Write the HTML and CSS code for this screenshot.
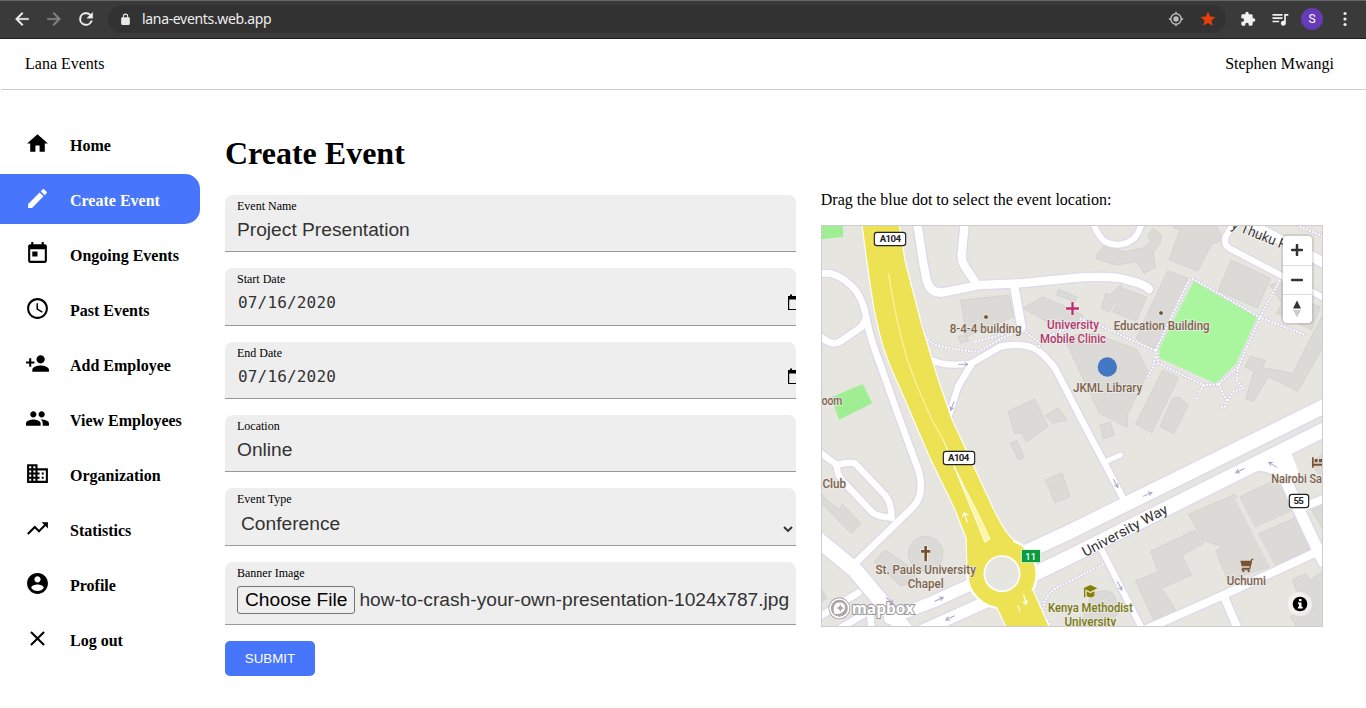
FILE: index.html
```html
<!DOCTYPE html>
<html lang="en">
<head>
<meta charset="utf-8">
<title>Lana Events</title>
<link rel="stylesheet" href="styles.css">
</head>
<body>
<div class="toolbar">
  <svg class="tb-icon" viewBox="0 0 24 24"><path d="M20 11H7.83l5.59-5.59L12 4l-8 8 8 8 1.41-1.41L7.83 13H20v-2z"/></svg>
  <svg class="tb-icon dim" viewBox="0 0 24 24"><path d="M12 4l-1.41 1.41L16.17 11H4v2h12.17l-5.58 5.59L12 20l8-8z"/></svg>
  <svg class="tb-icon" viewBox="0 0 24 24"><path d="M17.65 6.35A7.96 7.96 0 0 0 12 4a8 8 0 1 0 7.73 10h-2.08A6 6 0 1 1 12 6c1.66 0 3.14.69 4.22 1.78L13 11h7V4l-2.350 2.350z"/></svg>
  <div class="address">
    <svg class="lock" viewBox="0 0 24 24"><path d="M18 8h-1V6A5 5 0 0 0 7 6v2H6a2 2 0 0 0-2 2v10c0 1.100.9 2 2 2h12a2 2 0 0 0 2-2V10a2 2 0 0 0-2-2zM9 8V6a3 3 0 0 1 6 0v2z"/></svg>
    <span class="url">lana-events.web.app</span>
    <svg class="locate" viewBox="0 0 16 16"><circle cx="8" cy="8" r="5.200" fill="none" stroke="#bdbdbd" stroke-width="1.400"/><circle cx="8" cy="8" r="2.700" fill="#bdbdbd"/><path d="M8 .8V3M8 13v2.200M.8 8H3M13 8h2.200" stroke="#bdbdbd" stroke-width="1.400"/></svg>
    <svg class="star" viewBox="0 0 24 24"><path d="M12 17.270L18.180 21l-1.640-7.030L22 9.240l-7.190-.61L12 2 9.190 8.630 2 9.240l5.460 4.730L5.820 21z"/></svg>
  </div>
  <svg class="tb-ext" viewBox="0 0 24 24"><path d="M20.500 11H19V7a2 2 0 0 0-2-2h-4V3.500a2.500 2.500 0 0 0-5 0V5H4a2 2 0 0 0-2 2v3.800h1.500a2.700 2.700 0 0 1 0 5.400H2V20c0 1.100.9 2 2 2h3.800v-1.500a2.700 2.700 0 0 1 5.400 0V22H17a2 2 0 0 0 2-2v-4h1.500a2.500 2.500 0 0 0 0-5z"/></svg>
  <svg class="tb-music" viewBox="0 0 24 24"><path d="M15 6H3v2h12V6zm0 4H3v2h12v-2zM3 16h8v-2H3v2zM17 6v8.180c-.31-.11-.65-.18-1-.18-1.660 0-3 1.340-3 3s1.340 3 3 3 3-1.340 3-3V8h3V6h-5z"/></svg>
  <span class="avatar">S</span>
  <svg class="tb-dots" viewBox="0 0 4 16"><circle cx="2" cy="2.500" r="1.600"/><circle cx="2" cy="8" r="1.600"/><circle cx="2" cy="13.500" r="1.600"/></svg>
</div>

<header class="site-header"><span>Lana Events</span><span>Stephen Mwangi</span></header>

<div class="layout">
  <nav class="sidebar">
    <a class="item"><svg viewBox="0 0 24 24"><path d="M10 20v-6h4v6h5v-8h3L12 3 2 12h3v8z"/></svg><span>Home</span></a>
    <a class="item active"><svg viewBox="0 0 24 24"><path d="M3 17.250V21h3.750L17.810 9.940l-3.750-3.750L3 17.250zM20.710 7.040c.39-.39.39-1.020 0-1.410l-2.340-2.340c-.39-.39-1.020-.39-1.410 0l-1.830 1.830 3.750 3.750 1.830-1.830z"/></svg><span>Create Event</span></a>
    <a class="item"><svg viewBox="0 0 24 24"><path d="M19 3h-1V1h-2v2H8V1H6v2H5c-1.110 0-1.990.9-1.990 2L3 19c0 1.100.89 2 2 2h14c1.100 0 2-.9 2-2V5c0-1.100-.9-2-2-2zm0 16H5V8h14v11zM7 10h5v5H7z"/></svg><span>Ongoing Events</span></a>
    <a class="item"><svg viewBox="0 0 24 24"><path d="M11.990 2C6.470 2 2 6.480 2 12s4.470 10 9.990 10C17.520 22 22 17.520 22 12S17.520 2 11.990 2zM12 20c-4.420 0-8-3.580-8-8s3.580-8 8-8 8 3.580 8 8-3.580 8-8 8zm.5-13H11v6l5.250 3.150.75-1.230-4.500-2.670z"/></svg><span>Past Events</span></a>
    <a class="item"><svg viewBox="0 0 24 24"><path d="M15 12c2.210 0 4-1.790 4-4s-1.790-4-4-4-4 1.790-4 4 1.790 4 4 4zm-9-2V7H4v3H1v2h3v3h2v-3h3v-2H6zm9 4c-2.670 0-8 1.340-8 4v2h16v-2c0-2.660-5.330-4-8-4z"/></svg><span>Add Employee</span></a>
    <a class="item"><svg viewBox="0 0 24 24"><path d="M16 11c1.660 0 2.990-1.340 2.990-3S17.660 5 16 5c-1.660 0-3 1.340-3 3s1.340 3 3 3zm-8 0c1.660 0 2.990-1.340 2.990-3S9.660 5 8 5C6.340 5 5 6.340 5 8s1.340 3 3 3zm0 2c-2.330 0-7 1.170-7 3.500V19h14v-2.500c0-2.330-4.670-3.500-7-3.500zm8 0c-.29 0-.62.02-.97.05 1.160.84 1.970 1.970 1.970 3.450V19h6v-2.500c0-2.330-4.670-3.500-7-3.500z"/></svg><span>View Employees</span></a>
    <a class="item"><svg viewBox="0 0 24 24"><path d="M12 7V3H2v18h20V7H12zM6 19H4v-2h2v2zm0-4H4v-2h2v2zm0-4H4V9h2v2zm0-4H4V5h2v2zm4 12H8v-2h2v2zm0-4H8v-2h2v2zm0-4H8V9h2v2zm0-4H8V5h2v2zm10 12h-8v-2h2v-2h-2v-2h2v-2h-2V9h8v10zm-2-8h-2v2h2v-2zm0 4h-2v2h2v-2z"/></svg><span>Organization</span></a>
    <a class="item"><svg viewBox="0 0 24 24"><path d="M16 6l2.290 2.290-4.880 4.880-4-4L2 16.590 3.410 18l6-6 4 4 6.300-6.290L22 12V6z"/></svg><span>Statistics</span></a>
    <a class="item"><svg viewBox="0 0 24 24"><path d="M12 2C6.480 2 2 6.480 2 12s4.480 10 10 10 10-4.480 10-10S17.520 2 12 2zm0 3c1.660 0 3 1.340 3 3s-1.340 3-3 3-3-1.340-3-3 1.340-3 3-3zm0 14.200c-2.500 0-4.710-1.280-6-3.220.03-1.990 4-3.080 6-3.080 1.990 0 5.970 1.090 6 3.080-1.290 1.940-3.500 3.220-6 3.220z"/></svg><span>Profile</span></a>
    <a class="item"><svg viewBox="0 0 24 24"><path d="M19 6.410L17.590 5 12 10.590 6.410 5 5 6.410 10.590 12 5 17.590 6.410 19 12 13.410 17.590 19 19 17.590 13.410 12z"/></svg><span>Log out</span></a>
  </nav>

  <main class="content">
    <h1>Create Event</h1>
    <div class="columns">
      <form class="form">
        <div class="field"><label>Event Name</label><div class="value">Project Presentation</div></div>
        <div class="field"><label>Start Date</label><div class="value date"><span>07/16/2020</span><svg viewBox="0 0 18 18"><path d="M1 3h16v14H1zM2.200 6.500v9.400h14V6.500z" fill-rule="evenodd"/><path d="M3 1.500h2v2H3z"/></svg></div></div>
        <div class="field"><label>End Date</label><div class="value date"><span>07/16/2020</span><svg viewBox="0 0 18 18"><path d="M1 3h16v14H1zM2.200 6.500v9.400h14V6.500z" fill-rule="evenodd"/><path d="M3 1.500h2v2H3z"/></svg></div></div>
        <div class="field"><label>Location</label><div class="value">Online</div></div>
        <div class="field"><label>Event Type</label><div class="value select"><span>Conference</span><svg viewBox="0 0 10 8"><path d="M1 2l4 4 4-4" fill="none" stroke="#333" stroke-width="1.900"/></svg></div></div>
        <div class="field tall"><label>Banner Image</label><div class="file"><span class="choose">Choose File</span><span class="filename">how-to-crash-your-own-presentation-1024x787.jpg</span></div></div>
        <button class="submit" type="button">SUBMIT</button>
      </form>

      <section class="location">
        <p>Drag the blue dot to select the event location:</p>
        <div class="map">
          <svg class="map-canvas" viewBox="6 18 1500 1200">
            <defs>
              <g id="arrow"><path d="M-15 0H13M3-6L14 0 3 6" fill="none" stroke="#aaa5ca" stroke-width="3"/></g>
              <g id="roads">
                <path stroke-width="20" d="M0 160H30Q75 172 110 215Q132 250 138 290Q150 350 165 390L240 600L297 755Q314 825 280 860L100 1035M0 348Q35 380 60 365L125 320L140 292"/>
                <path stroke-width="25" d="M292 10L310 130L320 180Q330 222 370 217L480 195L600 190L750 175Q880 164 920 180Q970 190 987 207"/>
                <path stroke-width="25" d="M434 10L425 105Q425 130 440 148L470 192M583 200L605 325"/>
                <path stroke-width="19" d="M325 415Q370 443 455 430L540 380Q610 365 655 392Q685 415 708 450L785 600L912 840M455 432L415 498L385 592"/>
                <path stroke-width="18" d="M820 10Q835 50 855 65Q900 86 938 58Q955 45 965 10"/>
                <path stroke-width="18" d="M1240 10L1217 50Q1210 75 1230 86L1390 170L1515 235"/>
                <path stroke-width="30" d="M1275 5L1515 130"/>
                <path stroke-width="43" d="M610 1000L750 935L1520 555M635 1066L750 1010L1520 625"/>
                <path stroke-width="19" d="M0 697L50 735Q85 725 105 730L195 825Q215 850 215 895M50 735Q50 758 65 780L155 875Q170 890 215 893"/>
                <path stroke-width="46" d="M-10 955L105 1050L260 1235"/>
                <path stroke-width="35" d="M460 1090L340 1145L210 1195M500 1145L300 1235"/>
                <path stroke-width="20" d="M-10 1195L115 1118M60 1225L150 1172L155 1230"/>
                <path stroke-width="14" d="M850 728L902 705"/>
                <path stroke-width="18" d="M845 990L968 1230"/>
                <path stroke-width="24" d="M980 1227L1200 1130L1520 982M1210 1125L1255 1230"/>
                <path stroke-width="34" d="M1310 735Q1375 738 1395 775L1430 855L1510 1025"/>
                <path stroke-width="24" d="M1450 860L1515 835"/>
              </g>
              <g id="footpaths">
                <path d="M300 300Q315 370 350 375Q420 393 475 395L555 350 600 335M465 365L550 343M610 330L660 370 655 385M680 350L760 320M780 295L840 317 1008 393M1008 390L1045 310 1105 185Q1115 172 1130 183L1320 292 1455 345M1380 180L1320 292 1255 440 1195 493 1150 495 1015 430 1008 390M1005 410L1000 440 980 475M1150 495L1130 535M1195 493L1220 540 1215 560 1200 563M1255 440L1250 480 1270 505 1240 515 1222 543M1430 15L1510 50"/>
                <path d="M850 1033L710 1103Q668 1130 670 1180L690 1215"/>
              </g>
            </defs>
            <rect x="0" y="0" width="1520" height="1230" fill="#e6e5e0"/>
            <path d="M0 10H68L70 50 6 58zM34 532L128 492 157 550 57 599z" fill="#a0ee93"/>
            <g class="buildings">
              <path d="M422 241L566 225 582 290 440 350zM414 350L440 343 446 362 421 370zM608 265L668 230 790 285 765 330 710 320zM716 208L772 232 765 245 709 225zM564 574L645 537 684 620 620 666 604 638 584 640zM676 587L714 564 742 600 698 610zM570 670L590 661 613 712 596 720zM676 780L726 759 750 830 705 848z"/>
              <path d="M827 105L853 78 915 95 970 84 990 65 985 45 1000 24 1025 45 1020 70 1000 98 1006 142 972 160 950 125 890 135 830 117zM1085 10L1060 22 1080 30 1047 118 1133 154 1175 72 1210 60 1185 10zM1043 152L1104 175 1010 390 948 355zM908 205L980 232 948 304 878 275zM902 195L870 225 858 220 843 265 868 276 905 205zM1233 120L1352 175 1312 264 1195 212zM740 370L765 345 820 340 950 388 985 455 922 585 922 622 838 580zM1028 450L1076 473 995 638 947 612zM1058 535L1080 532 1105 555 1062 641 1020 620 1042 570zM1275 440L1292 408 1336 422 1327 443 1418 460 1510 280V380L1433 514 1345 470 1300 545 1277 537 1302 454zM1385 250L1350 195 1380 185 1440 240 1500 260 1475 330 1370 280zM840 615L870 605 883 645 850 657z"/>
              <path d="M0 815L20 840 60 870 67 852 122 910 95 942 0 845zM162 1025L195 990 270 1040 297 1080 242 1098z"/>
              <path d="M1105 883L1245 823 1352 1040 1223 1080 1187 993 1206 980 1150 960zM1260 830L1365 780 1430 870 1305 925zM1315 942L1432 890 1483 980 1360 1040zM992 994L1125 930 1152 970 1085 1005 1115 1065 1025 1105 1073 1178 1005 1207 946 1082 1015 1055zM815 1120Q875 1100 885 1130L895 1180 850 1225 780 1220zM1417 1080L1457 1060 1470 1080 1510 1055V1220H1430L1410 1190 1480 1165 1450 1120 1430 1115zM1475 870L1510 855V930zM1475 730L1510 695V760H1495zM6 1110L20 1135 6 1145z"/>
              <circle cx="317" cy="1001" r="52"/>
            </g>
            <path d="M1122 182L1311 291 1248 432 1187 490 1019 415 1018 385z" fill="#aaf69e"/>
            <path d="M1252 835L1360 1045M1302 932L1430 875" stroke="#e6e5e0" stroke-width="14"/>
            <use href="#roads" class="casing"/>
            <use href="#roads" class="road"/>
            <path fill="#fff" d="M1290 740L1340 700 1414 665 1414 700 1445 780 1390 790Q1370 745 1320 742z"/>
            <use href="#footpaths" class="path-base"/>
            <use href="#footpaths" class="path-dash"/>
            <path class="hw-edge" d="M127 10L150 180Q160 260 180 340Q200 420 240 500L330 710 405 865 440 955 443 1061H560L580 960Q560 950 520 870L395 600 350 470 305 320 255 130 235 10z"/>
            <path class="hw-edge" d="M530 1160L565 1230H690L637 1110z"/>
            <circle class="hw-edge" cx="546" cy="1061" r="104"/>
            <path class="hw" d="M127 10L150 180Q160 260 180 340Q200 420 240 500L330 710 405 865 440 955 443 1061H560L580 960Q560 950 520 870L395 600 350 470 305 320 255 130 235 10z"/>
            <path class="hw" d="M525 1150L565 1230H690L637 1110z"/>
            <circle cx="546" cy="1061" r="53" fill="#e6e5e0" stroke="#fff" stroke-width="5"/>
            <path d="M206 160Q220 270 262 420Q292 505 336 600L370 660" fill="none" stroke="#fffbd0" stroke-width="2.500"/>
            <path d="M370 660L400 734 495 967 510 957Q475 880 445 825L400 734" fill="#fff4a0" stroke="#fff" stroke-width="3"/>
            <path d="M442 907L433 880M427 891L433 879 446 886M611 1123L618 1152M608 1145L618 1153 622 1139M600 1175L594 1157" fill="none" stroke="#fff" stroke-width="3.500"/>
            <use href="#arrow" transform="translate(430 433)"/>
            <use href="#arrow" transform="translate(397 558) rotate(112)"/>
            <use href="#arrow" transform="translate(983 823) rotate(-24)"/>
            <use href="#arrow" transform="translate(1260 752) rotate(154)"/>
            <use href="#arrow" transform="translate(1358 734) rotate(212)"/>
            <use href="#arrow" transform="translate(887 790) rotate(62)"/>
            <use href="#arrow" transform="translate(899 1098) rotate(62)"/>
            <use href="#arrow" transform="translate(357 1138) rotate(-25)"/>
            <use href="#arrow" transform="translate(390 1194) rotate(154)"/>
            <use href="#arrow" transform="translate(209 1142) rotate(42)"/>

            <g class="shield">
              <rect x="163" y="37" width="94" height="40" rx="8"/><text x="211" y="67" textLength="64">A104</text>
              <rect x="370" y="694" width="94" height="40" rx="8"/><text x="416" y="724" textLength="64">A104</text>
              <rect x="1408" y="823" width="58" height="40" rx="8"/><text x="1436" y="853" textLength="31">55</text>
            </g>
            <rect x="604" y="989" width="57" height="39" fill="#0a9c3f" stroke="#fff" stroke-width="2"/>
            <text class="green-no" x="632" y="1019">11</text>

            <g class="label">
              <text x="497" y="340" textLength="216" lengthAdjust="spacingAndGlyphs">8-4-4 building</text>
              <text x="1025" y="329" textLength="288" lengthAdjust="spacingAndGlyphs">Education Building</text>
              <text x="863" y="516" textLength="208" lengthAdjust="spacingAndGlyphs">JKML Library</text>
              <text x="36" y="555" textLength="62" lengthAdjust="spacingAndGlyphs">oom</text>
              <text x="43" y="804" textLength="71" lengthAdjust="spacingAndGlyphs">Club</text>
              <text x="317" y="1062" textLength="301" lengthAdjust="spacingAndGlyphs">St. Pauls University</text>
              <text x="317" y="1105" textLength="108" lengthAdjust="spacingAndGlyphs">Chapel</text>
              <text x="1279" y="1094" textLength="118" lengthAdjust="spacingAndGlyphs">Uchumi</text>
              <text x="1354" y="790" class="from-left" textLength="152" lengthAdjust="spacingAndGlyphs">Nairobi Sa</text>
            </g>
            <g class="label pink"><text x="759" y="327" textLength="156" lengthAdjust="spacingAndGlyphs">University</text><text x="759" y="369" textLength="198" lengthAdjust="spacingAndGlyphs">Mobile Clinic</text></g>
            <g class="label olive"><text x="811" y="1175" textLength="254" lengthAdjust="spacingAndGlyphs">Kenya Methodist</text><text x="811" y="1217" textLength="155" lengthAdjust="spacingAndGlyphs">University</text></g>
            <g class="street"><text transform="translate(921 944) rotate(-28)" textLength="284" lengthAdjust="spacingAndGlyphs">University Way</text><text transform="translate(1313 57) rotate(22)" textLength="174" lengthAdjust="spacingAndGlyphs">y Thuku R</text></g>
            <g stroke="#fff" stroke-width="2" fill="#6f4f31"><circle cx="498" cy="291" r="7"/><circle cx="1023" cy="279" r="7"/></g>
            <path d="M754 246h7v16h16v7h-16v16h-7v-16h-16v-7h16z" fill="#bd2d6c" stroke="#fff" stroke-width="3" paint-order="stroke"/>
            <path d="M313 978h8v12h10v8h-10v26h-8v-26h-10v-8h10z" fill="#7a5230" stroke="#fff" stroke-width="3" paint-order="stroke"/>
            <path d="M1261 1022h31l3-6h5v4h-3l-6 27h-25l-1-4h23l1-4h-24zM1264 1048h25v3h-25z" fill="#7a5230"/><circle cx="1270" cy="1053" r="3.500" fill="#7a5230"/><circle cx="1286" cy="1053" r="3.500" fill="#7a5230"/>
            <path d="M1476 712h5v19h40v12h-4v-6h-36v6h-5zM1484 717h9v10h-9zM1497 717h20v10h-20z" fill="#7a5230"/>
            <path d="M790 1105L811 1095 832 1105 811 1115zM800 1114v14q11 8 23 0v-14l-12 6zM792 1107h4v25h-4z" fill="#858000"/>
            <circle cx="862" cy="441" r="29" fill="#4377c4"/>
            <g class="logo"><circle cx="58" cy="1165" r="28" fill="none" stroke="#999" stroke-width="9"/><circle cx="58" cy="1165" r="28" fill="#aaa8a5" stroke="#fff" stroke-width="5"/><path d="M43 1181Q37 1156 50 1149Q65 1144 73 1153Q80 1170 65 1178Q54 1184 43 1181z" fill="#fff"/><path d="M61 1153l4 8 8 3-8 4-4 8-4-8-8-4 8-3z" fill="#aaa8a5"/><text x="95" y="1181" textLength="188" lengthAdjust="spacingAndGlyphs">mapbox</text></g>
          </svg>
          <div class="zoom-controls">
            <span><svg viewBox="0 0 12 12"><path d="M6 1v10M1 6h10" stroke="#333" stroke-width="2.500" stroke-linecap="round"/></svg></span>
            <span><svg viewBox="0 0 12 12"><path d="M1 6h10" stroke="#333" stroke-width="2.500" stroke-linecap="round"/></svg></span>
            <span><svg class="compass" viewBox="0 0 10 18"><path d="M1 8.500L5 .5l4 8z" fill="#333"/><path d="M1 10l4 7.500L9 10z" fill="#ccc"/></svg></span>
          </div>
          <div class="info"><svg viewBox="0 0 24 24"><circle cx="12" cy="12" r="7.300"/><path d="M11 7h2.500v2.300H11zM10 10.500h3.500v4.300h1.200v1.800H10v-1.800h1v-2.600h-1z" fill="#fff"/></svg></div>
        </div>
      </section>
    </div>
  </main>
</div>
</body>
</html>
```
FILE: styles.css
```css
* { box-sizing: border-box; }
body { margin: 0; height: 708px; overflow: hidden; background: #fff; color: #000; font: 16px "Liberation Serif", serif; }
svg { display: block; flex: none; }

.toolbar { display: flex; align-items: center; height: 39px; padding: 0 0 1px 12px; background: #3a3a3a; border-top: 1px solid #656765; border-bottom: 1px solid #201c20; }
.tb-icon { width: 20px; height: 20px; margin-right: 12px; fill: #f1f1f1; stroke: #f1f1f1; stroke-width: .4; }
.tb-icon.dim { fill: #858585; stroke: #858585; }
.address { display: flex; align-items: center; width: 1118px; height: 28px; border-radius: 14px; background: #323232; padding: 0 9px 0 11px; }
.lock { width: 13px; height: 13px; fill: #e8e8e8; }
.url { flex: 1; margin-left: 10px; padding-bottom: 2px; color: #eee; font: 14px "Noto Sans", sans-serif; letter-spacing: -.33px; }
.locate { width: 16px; height: 16px; }
.star { width: 18px; height: 18px; margin-left: 15px; fill: #e8400c; }
.tb-ext { width: 16px; height: 16px; margin-left: 14px; fill: #f1f1f1; }
.tb-music { width: 20px; height: 20px; margin-left: 14px; fill: #f1f1f1; }
.avatar { width: 22px; height: 22px; margin-left: 11px; border-radius: 50%; background: #673ab7; color: #fff; font: 12px/22px Roboto, sans-serif; text-align: center; }
.tb-dots { width: 4px; height: 16px; margin-left: 20px; fill: #f1f1f1; }

.site-header { display: flex; justify-content: space-between; align-items: center; height: 51px; margin-left: 1px; padding: 0 32px 1px 24px; border-bottom: 1px solid #ccc; }

.layout { display: flex; padding-top: 29px; }
.sidebar { display: flex; flex-direction: column; gap: 5px; width: 200px; }
.item { display: flex; align-items: center; gap: 20px; height: 50px; padding-left: 25px; font-weight: bold; white-space: nowrap; }
.item svg { width: 25px; height: 25px; fill: currentColor; margin-bottom: 2px; }
.item span { padding-top: 3px; }
.item.active { background: #4775fb; color: #fff; border-radius: 0 15px 15px 0; }

.content { padding: 16px 0 0 25px; }
h1 { margin: 0; font-size: 32px; line-height: 37px; }
.columns { display: flex; gap: 24.800px; padding-top: 22.800px; }
.form { display: flex; flex-direction: column; gap: 16px; width: 571px; }
.field { height: 57.400px; padding: 4px 0 0 12px; background: #eee; border-bottom: 1px solid #999; border-radius: 8px 8px 0 0; overflow: hidden; }
.field.tall { height: 63.200px; }
.field label { display: block; font-size: 12px; line-height: 14px; }
.value { display: flex; align-items: center; height: 33px; margin-top: .7px; color: #333; font: 19.200px "Liberation Sans", sans-serif; }
.date { position: relative; padding-left: 1px; height: 32px; margin-top: .5px; font: 16px "DejaVu Sans Mono", monospace; letter-spacing: .17px; }
.date svg { position: absolute; right: -9px; top: 6.700px; width: 18px; height: 18px; fill: #000; }
.select { justify-content: space-between; padding: 0 3px 0 4px; }
.select svg { width: 10px; height: 8px; margin-top: 11px; }
.file { display: flex; align-items: center; gap: 4px; padding-top: 6px; color: #333; font: 19.200px "Liberation Sans", sans-serif; white-space: nowrap; }
.choose { height: 28px; padding: 0 7px; border: 1px solid #767676; border-radius: 3px; background: #efefef; color: #000; line-height: 26px; }
.submit { width: 90px; height: 35px; padding: 0; border: 0; border-radius: 5px; background: #4775fb; color: #fff; font: 13.333px "Liberation Sans", sans-serif; }

.location p { margin: -4px 0 16.200px; line-height: 18px; }
.map { position: relative; width: 502px; height: 402px; border: 1px solid #ccc; overflow: hidden; }
.map-canvas { width: 500px; height: 400px; font-family: Roboto, sans-serif; }
.buildings { fill: #dbdad7; stroke: #cecdc9; stroke-width: 2; }
.casing, .road { fill: none; stroke-linecap: round; stroke-linejoin: round; }
.casing { stroke: #dad8eb; filter: drop-shadow(2px 0 0 #dad8eb) drop-shadow(-2px 0 0 #dad8eb) drop-shadow(0 2px 0 #dad8eb) drop-shadow(0 -2px 0 #dad8eb); }
.road { stroke: #fff; }
.path-base, .path-dash { fill: none; }
.path-base { stroke: #d6d4e2; stroke-width: 10; }
.path-dash { stroke: #fff; stroke-width: 6; stroke-dasharray: 6 4; }
.hw { fill: #ede253; }
.hw-edge { fill: #ede253; stroke: #fff; stroke-width: 7; }
.label text { fill: #7d6350; stroke: #eeece8; stroke-width: 4; paint-order: stroke; font-size: 37px; font-weight: 500; text-anchor: middle; }
.label .from-left { text-anchor: start; }
.label.pink text { fill: #b03a70; }
.label.olive text { fill: #77790f; }
.street text { fill: #333; stroke: #fff; stroke-width: 4; paint-order: stroke; font-size: 42px; text-anchor: middle; }
.shield rect { fill: #fff; stroke: #222; stroke-width: 3.500; }
.shield text { fill: #222; font-size: 29px; font-weight: 700; text-anchor: middle; }
.green-no { fill: #fff; font-size: 28px; font-weight: 500; text-anchor: middle; }
.logo text { fill: #fff; stroke: #999; stroke-width: 6; paint-order: stroke; font: 700 46px "Open Sans", sans-serif; }
.zoom-controls { position: absolute; top: 10px; right: 10px; width: 29px; border-radius: 4px; background: #fff; box-shadow: 0 0 0 2px rgba(0,0,0,.1); }
.zoom-controls span { display: flex; align-items: center; justify-content: center; height: 29px; }
.zoom-controls span + span { border-top: 1px solid #ddd; }
.zoom-controls svg { width: 12px; height: 12px; }
.zoom-controls .compass { width: 10px; height: 18px; }
.info { position: absolute; right: 10px; bottom: 10px; width: 24px; height: 24px; border-radius: 50%; background: rgba(255,255,255,.5); }
```
